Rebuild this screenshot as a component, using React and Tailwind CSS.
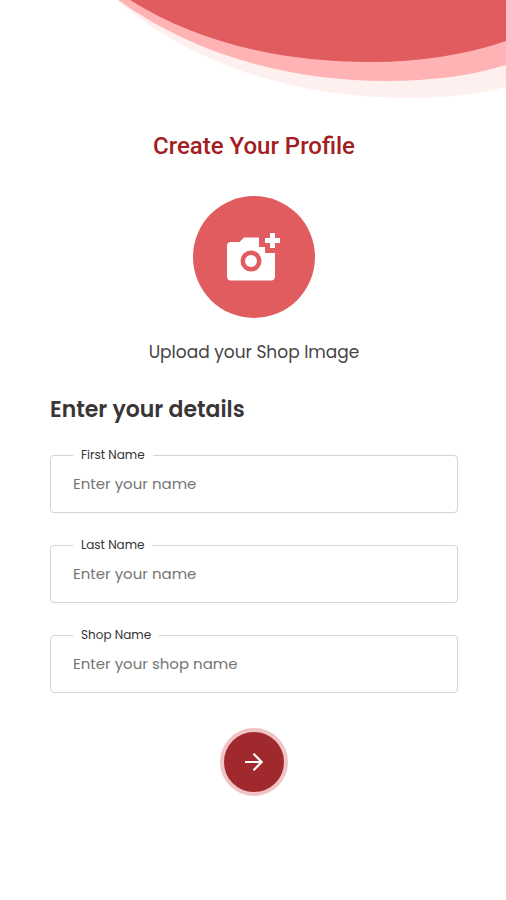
import React, { useState } from "react";

const FIELDS = [
  { id: "firstName", label: "First Name", placeholder: "Enter your name" },
  { id: "lastName", label: "Last Name", placeholder: "Enter your name" },
  { id: "shopName", label: "Shop Name", placeholder: "Enter your shop name" },
];

function HeaderWave() {
  return (
    <svg viewBox="0 0 506 104" className="block w-full" aria-hidden="true">
      <path
        d="M117 0C190 64 295 98 410 98C445 98 478 94 506 87V0Z"
        fill="#fff0f0"
      />
      <path
        d="M118 0C192 53 285 81 388 81C430 81 470 76 506 65V0Z"
        fill="#ffb3b4"
      />
      <path
        d="M130 0C198 43 282 62 370 62C420 62 465 55 506 41V0Z"
        fill="#e05c5f"
      />
    </svg>
  );
}

function CameraIcon() {
  return (
    <svg viewBox="0 0 54 48" className="h-12 w-[54px]" aria-hidden="true">
      <path
        fill="#fff"
        fillRule="evenodd"
        d="M4 9H12.5L17 4.5H32V14H38V20H48V43Q48 47.5 44 47.5H4Q0 47.5 0 43V13Q0 9 4 9ZM24 17.5A10.5 10.5 0 1 0 24 38.5A10.5 10.5 0 1 0 24 17.5Z"
      />
      <circle cx="24" cy="28" r="6" fill="#fff" />
      <path
        fill="#fff"
        d="M43 0H48V5H53V10H48V15H43V10H38V5H43Z"
      />
    </svg>
  );
}

function ArrowIcon() {
  return (
    <svg
      viewBox="0 0 20 20"
      className="h-5 w-5"
      fill="none"
      stroke="#fff"
      strokeWidth="2.2"
      aria-hidden="true"
    >
      <path d="M1 10H17.5M9.5 1.8L17.7 10L9.5 18.2" />
    </svg>
  );
}

function Field({ id, label, placeholder, value, onChange }) {
  return (
    <fieldset className="min-w-0 rounded border border-[#d4d4d4] px-[22px] pb-[9px]">
      <legend className="h-4 px-2 text-xs leading-4 text-[#333]">
        <label htmlFor={id} className="block">
          {label}
        </label>
      </legend>
      <input
        id={id}
        type="text"
        value={value}
        onChange={(e) => onChange(id, e.target.value)}
        placeholder={placeholder}
        className="block h-10 w-full bg-transparent text-[15px] text-gray-800 placeholder:text-[#757575] focus:outline-none"
      />
    </fieldset>
  );
}

export default function App() {
  const [values, setValues] = useState({});

  function handleChange(id, value) {
    setValues((prev) => ({ ...prev, [id]: value }));
  }

  return (
    <div className="min-h-screen bg-white font-['Poppins','Inter',sans-serif]">
      <HeaderWave />

      <main className="pr-12 pb-12 pl-[50px]">
        <h1 className="pt-6 text-center font-['Roboto',sans-serif] text-2xl leading-9 font-medium text-[#a31d22]">
          Create Your Profile
        </h1>

        <div className="mt-8 flex flex-col items-center">
          <button
            type="button"
            aria-labelledby="upload-text"
            className="flex h-[122px] w-[122px] items-center justify-center rounded-full bg-[#e05c5f]"
          >
            <CameraIcon />
          </button>
          <p id="upload-text" className="mt-5 text-[17px] leading-7 text-[#444]">
            Upload your Shop Image
          </p>
        </div>

        <form onSubmit={(e) => e.preventDefault()}>
          <h2 className="mt-7 text-[22px] leading-8 font-semibold text-[#3a3536]">
            Enter your details
          </h2>

          <div className="mt-[21px] flex flex-col gap-6">
            {FIELDS.map((f) => (
              <Field
                key={f.id}
                {...f}
                value={values[f.id] || ""}
                onChange={handleChange}
              />
            ))}
          </div>

          <button
            type="submit"
            aria-label="Continue"
            className="mx-auto mt-[35px] flex h-[68px] w-[68px] items-center justify-center rounded-full border-4 border-[#f0c4c6] bg-[#a0292d]"
          >
            <ArrowIcon />
          </button>
        </form>
      </main>
    </div>
  );
}
